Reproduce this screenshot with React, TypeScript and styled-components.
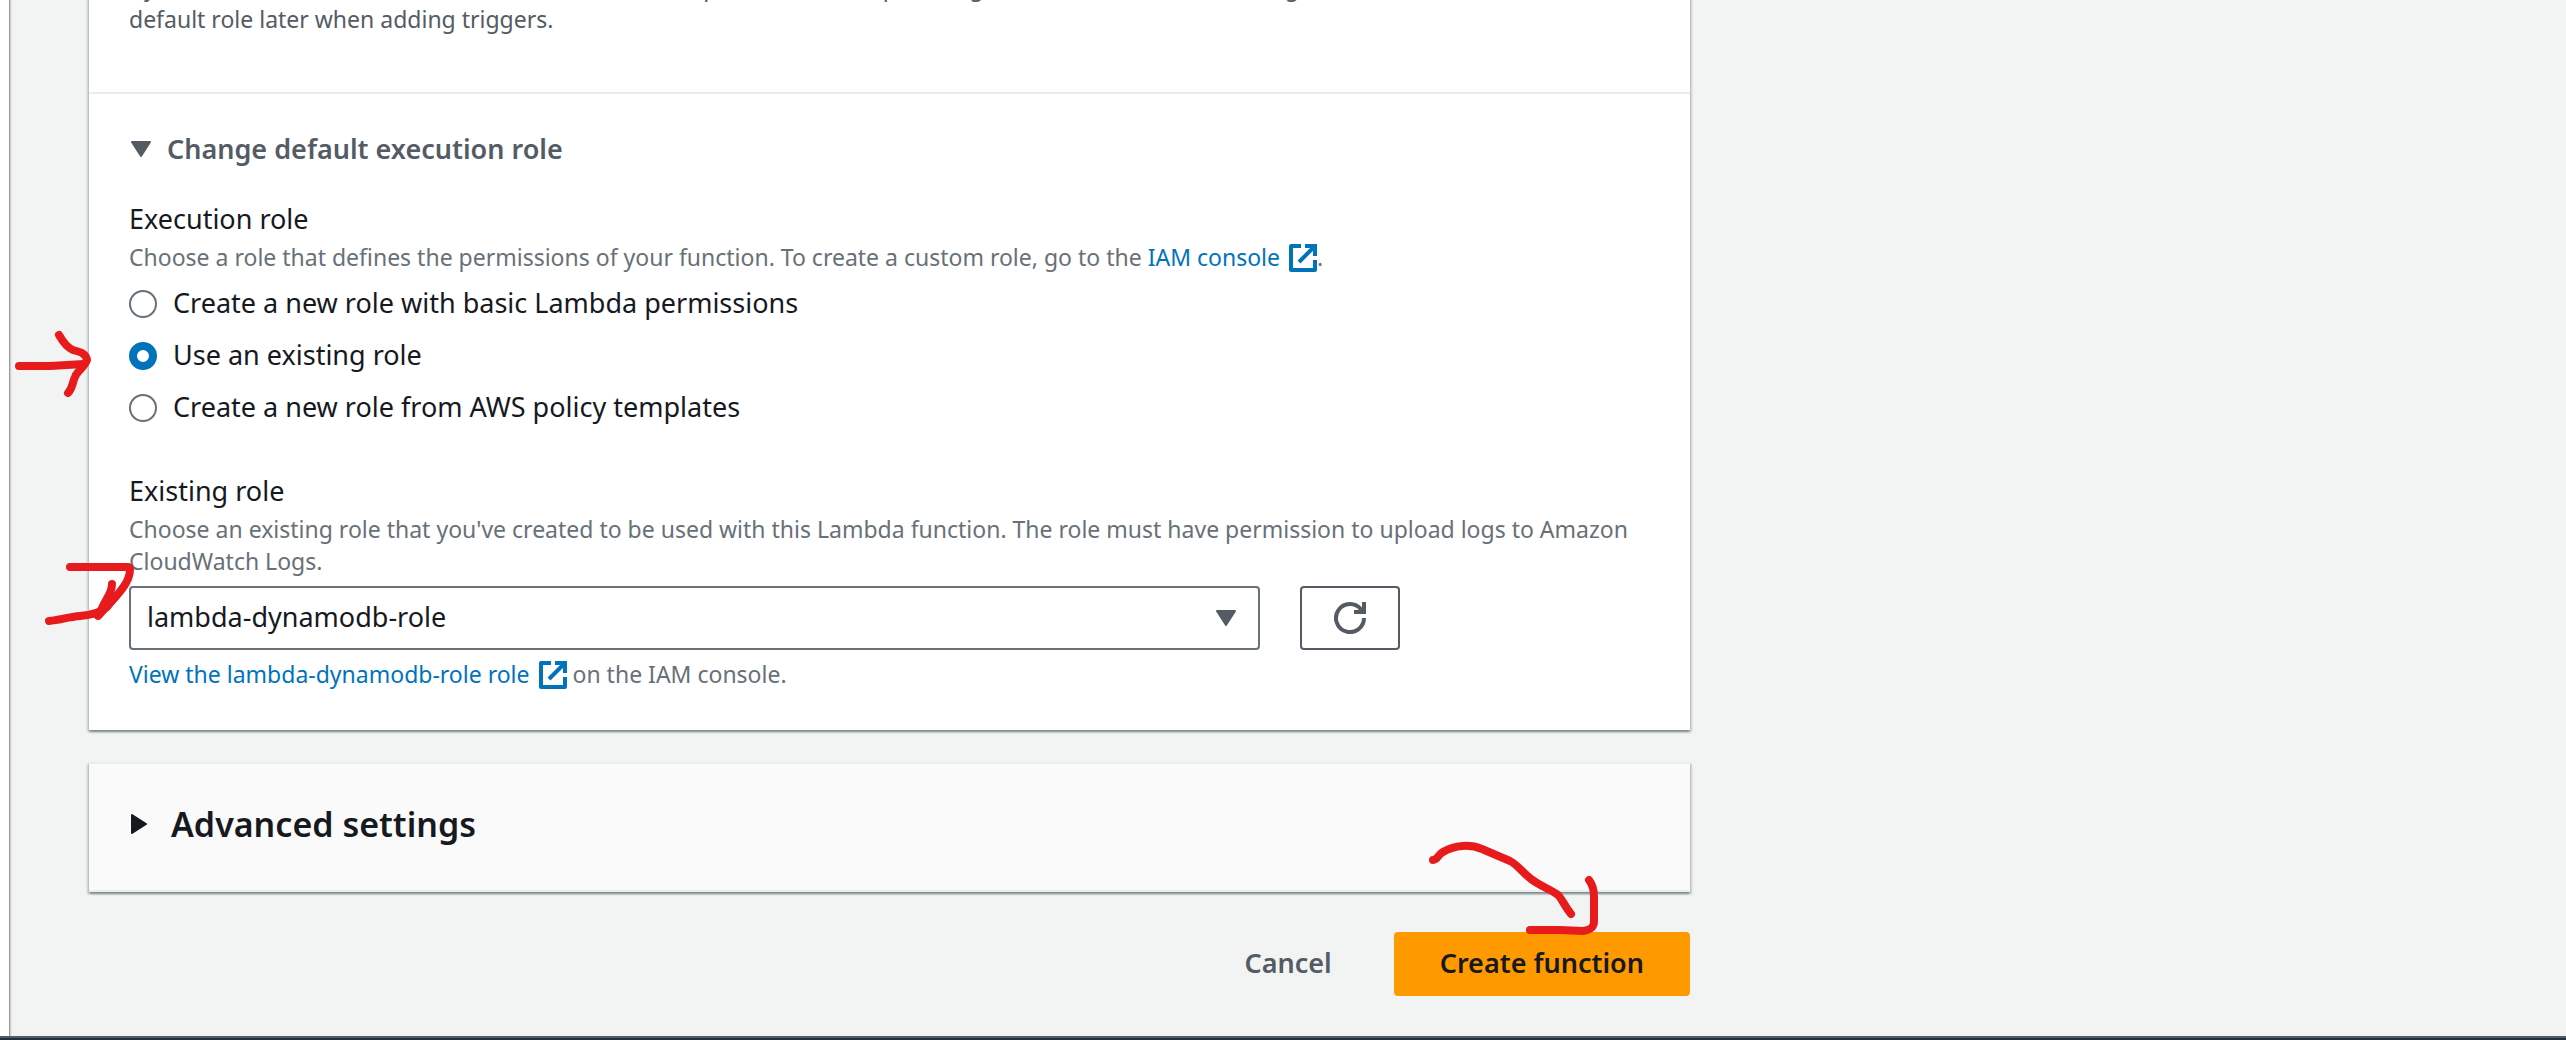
import React, { useState } from 'react';
import styled, { createGlobalStyle, css } from 'styled-components';

const color = {
  page: '#f2f3f3',
  surface: '#ffffff',
  header: '#fafafa',
  text: '#16191f',
  muted: '#545b64',
  hint: '#687078',
  divider: '#eaeded',
  link: '#0073bb',
  primary: '#ff9900',
  mark: '#e71b1b',
};

const GlobalStyle = createGlobalStyle`
  *, *::before, *::after { box-sizing: border-box; }
  body {
    margin: 0;
    background: ${color.page};
    color: ${color.text};
    font: 400 27px/44px "Noto Sans", "Open Sans", sans-serif;
  }
`;

const Shell = styled.div`
  position: relative;
  display: flex;
  flex-direction: column;
  min-height: 100vh;
  overflow: hidden;
`;

const Body = styled.div`
  display: flex;
  flex: 1;
`;

const NavEdge = styled.aside`
  flex: 0 0 9px;
  background: ${color.surface};
  box-shadow: 1px 0 1px rgba(0, 28, 36, 0.3), 2px 0 2px rgba(0, 28, 36, 0.15);
`;

const Main = styled.main`
  flex: 1;
  min-width: 0;
  margin-top: -29px;
  padding: 0 80px 40px;
`;

const Column = styled.form`
  display: flex;
  flex-direction: column;
  gap: 32px;
  max-width: 1601px;
`;

const Card = styled.section`
  background: ${color.surface};
  box-shadow: 0 2px 2px rgba(0, 28, 36, 0.3), 2px 2px 2px rgba(0, 28, 36, 0.15),
    -2px 2px 2px rgba(0, 28, 36, 0.15);
`;

const SettingsCard = styled(Card)`
  border: solid ${color.divider};
  border-width: 2px 0;
  background: ${color.header};
`;

const Intro = styled.div`
  padding: 0 40px 57px;
  border-bottom: 2px solid ${color.divider};
`;

const RoleSection = styled.div`
  padding: 33px 40px 40px;
`;

const Hint = styled.p<{ $strong?: boolean }>`
  margin: 0;
  color: ${(p) => (p.$strong ? color.muted : color.hint)};
  font-size: 23px;
  line-height: 32px;
`;

const Expander = styled.button<{ $large?: boolean }>`
  display: flex;
  align-items: center;
  gap: 16px;
  padding: 0;
  border: 0;
  background: none;
  color: ${color.muted};
  font: inherit;
  font-weight: 600;
  cursor: pointer;

  ${(p) =>
    p.$large &&
    css`
      width: 100%;
      padding: 38px 40px 44px;
      gap: 24px;
      color: ${color.text};
      font-size: 34px;
    `}
`;

const Field = styled.fieldset<{ $gap: number }>`
  min-width: 0;
  margin: ${(p) => p.$gap}px 0 0;
  padding: 0;
  border: 0;
`;

const Legend = styled.legend`
  padding: 0;
`;

const FieldLabel = styled.label`
  display: block;
`;

const Options = styled.div`
  display: flex;
  flex-direction: column;
  align-items: flex-start;
  gap: 8px;
  margin-top: 8px;
`;

const Option = styled.label`
  display: flex;
  align-items: flex-start;
  gap: 16px;
`;

const Radio = styled.input`
  appearance: none;
  flex: none;
  width: 28px;
  height: 28px;
  margin: 9px 0 0;
  border: 2px solid ${color.hint};
  border-radius: 50%;
  background: ${color.surface};

  &:checked {
    border: 8px solid ${color.link};
  }
`;

const Link = styled.a`
  color: ${color.link};
  text-decoration: none;
`;

const LinkIcon = styled.svg`
  width: 28px;
  height: 28px;
  margin-left: 9px;
  vertical-align: -6px;
`;

const PickerRow = styled.div`
  display: grid;
  grid-template-columns: repeat(12, minmax(0, 1fr));
  column-gap: 40px;
  margin: 9px 0 8px;
`;

const SelectBox = styled.div`
  position: relative;
  grid-column: span 9;
`;

const Select = styled.select`
  appearance: none;
  display: block;
  width: 100%;
  height: 64px;
  padding: 0 80px 2px 16px;
  border: 2px solid ${color.hint};
  border-radius: 4px;
  background: ${color.surface};
  color: ${color.text};
  font: inherit;
`;

const SelectArrow = styled.svg`
  position: absolute;
  top: 24px;
  right: 24px;
  width: 20px;
  height: 16px;
  pointer-events: none;
`;

const Button = styled.button<{ $kind: 'icon' | 'link' | 'primary' }>`
  display: flex;
  align-items: center;
  justify-content: center;
  height: 64px;
  padding: 0 44px 2px;
  border: 2px solid transparent;
  border-radius: 4px;
  background: none;
  color: ${color.muted};
  font: inherit;
  font-weight: 600;
  cursor: pointer;

  ${(p) =>
    p.$kind === 'icon' &&
    css`
      width: 100px;
      padding: 0;
      border-color: ${color.muted};
      background: ${color.surface};
    `}
  ${(p) =>
    p.$kind === 'primary' &&
    css`
      border-color: ${color.primary};
      background: ${color.primary};
      color: ${color.text};
    `}
`;

const Actions = styled.div`
  display: flex;
  justify-content: flex-end;
  gap: 16px;
  margin-top: 8px;
`;

const Footer = styled.footer`
  height: 4px;
  border-top: 2px solid ${color.muted};
  background: #232f3e;
`;

const Ink = styled.svg`
  position: absolute;
  top: 0;
  left: 0;
  width: 1700px;
  height: 1040px;
  pointer-events: none;
  fill: none;
  stroke: ${color.mark};
  stroke-width: 8;
  stroke-linecap: round;
  stroke-linejoin: round;
`;

const Caret = styled.svg<{ $w: number; $h: number }>`
  flex: none;
  width: ${(p) => p.$w}px;
  height: ${(p) => p.$h}px;
  margin-left: 2px;
  fill: currentColor;
  stroke: currentColor;
  stroke-width: 2;
  stroke-linejoin: round;
`;

const ExternalIcon = () => (
  <LinkIcon viewBox="0 0 28 28" aria-hidden="true">
    <path d="M12 2H2V26H26V16" fill="none" stroke={color.link} strokeWidth="4" strokeLinejoin="round" />
    <path d="M16 2H26V12M26 2L10 18" fill="none" stroke={color.link} strokeWidth="4" />
  </LinkIcon>
);

const RefreshIcon = () => (
  <svg width="32" height="32" viewBox="0 0 32 32" fill="none" stroke={color.muted} strokeWidth="4" aria-hidden="true">
    <path d="M30 16A14 14 0 1 1 27 7.4L30 10" />
    <path d="M30 0V10H20" />
  </svg>
);

const roleOptions = [
  { id: 'basic', label: 'Create a new role with basic Lambda permissions' },
  { id: 'existing', label: 'Use an existing role' },
  { id: 'template', label: 'Create a new role from AWS policy templates' },
];

export default function App() {
  const [mode, setMode] = useState('existing');

  return (
    <>
      <GlobalStyle />
      <Shell>
        <Body>
          <NavEdge />
          <Main>
            <Column onSubmit={(e) => e.preventDefault()}>
              <Card>
                <Intro>
                  <Hint $strong>
                    By default, Lambda will create an execution role with permissions to upload logs to Amazon
                    CloudWatch Logs. You can customize this
                    <br />
                    default role later when adding triggers.
                  </Hint>
                </Intro>
                <RoleSection>
                  <Expander type="button" aria-expanded="true">
                    <Caret $w={20} $h={16} viewBox="0 0 20 16">
                      <path d="M1 1H19L10 15Z" />
                    </Caret>
                    Change default execution role
                  </Expander>

                  <Field $gap={26}>
                    <Legend>Execution role</Legend>
                    <Hint>
                      Choose a role that defines the permissions of your function. To create a custom role, go to the{' '}
                      <Link href="#iam">
                        IAM console
                        <ExternalIcon />
                      </Link>
                      .
                    </Hint>
                    <Options>
                      {roleOptions.map((o) => (
                        <Option key={o.id}>
                          <Radio
                            type="radio"
                            name="execution-role"
                            value={o.id}
                            checked={mode === o.id}
                            onChange={() => setMode(o.id)}
                          />
                          {o.label}
                        </Option>
                      ))}
                    </Options>
                  </Field>

                  <Field as="div" $gap={40}>
                    <FieldLabel htmlFor="existing-role">Existing role</FieldLabel>
                    <Hint>
                      Choose an existing role that you've created to be used with this Lambda function. The role must
                      have permission to upload logs to Amazon CloudWatch Logs.
                    </Hint>
                    <PickerRow>
                      <SelectBox>
                        <Select id="existing-role" defaultValue="lambda-dynamodb-role">
                          <option>lambda-dynamodb-role</option>
                        </Select>
                        <SelectArrow viewBox="0 0 20 16" fill={color.muted} stroke={color.muted} strokeWidth="2" strokeLinejoin="round">
                          <path d="M1 1H19L10 15Z" />
                        </SelectArrow>
                      </SelectBox>
                      <Button type="button" $kind="icon" aria-label="Refresh roles">
                        <RefreshIcon />
                      </Button>
                    </PickerRow>
                    <Hint>
                      <Link href="#role">
                        View the lambda-dynamodb-role role
                        <ExternalIcon />
                      </Link>{' '}
                      on the IAM console.
                    </Hint>
                  </Field>
                </RoleSection>
              </Card>

              <SettingsCard>
                <Expander type="button" $large aria-expanded="false">
                  <Caret $w={16} $h={20} viewBox="0 0 16 20">
                    <path d="M1 1L15 10L1 19Z" />
                  </Caret>
                  Advanced settings
                </Expander>
              </SettingsCard>

              <Actions>
                <Button type="button" $kind="link">
                  Cancel
                </Button>
                <Button type="submit" $kind="primary">
                  Create function
                </Button>
              </Actions>
            </Column>
          </Main>
        </Body>
        <Footer />
        <Ink viewBox="0 0 1700 1040" aria-hidden="true">
          <path d="M19 366L50 366L84 364" />
          <path d="M59 335C63 342 68 348 73 350C80 352 86 353 87 360C85 367 77 371 75 377C72 383 73 388 68 393" />
          <path d="M70 567H128C132 568 129 578 126 583C121 592 113 599 107 607C100 613 92 615 80 616C68 617 60 620 49 621" />
          <path d="M112 584C112 593 106 599 103 606L98 616L117 595" />
          <path d="M1433 860C1438 860 1438 854 1443 852C1455 845 1470 844 1482 849L1510 861C1518 865 1523 873 1531 879C1540 886 1550 889 1558 895C1562 899 1564 905 1571 914" />
          <path d="M1589 880C1593 885 1594 890 1594 897V921C1594 928 1590 930 1583 931L1560 930H1530" />
        </Ink>
      </Shell>
    </>
  );
}
